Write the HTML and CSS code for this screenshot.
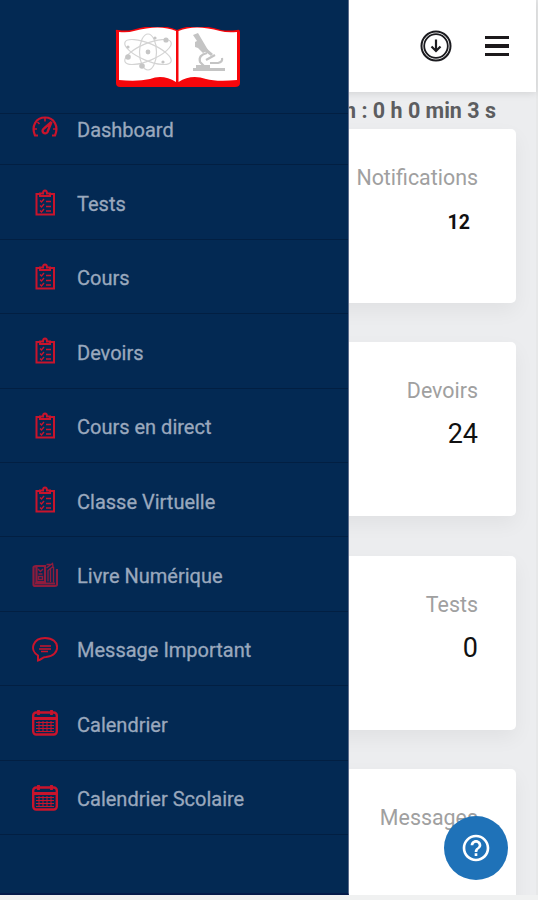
FILE: index.html
```html
<!DOCTYPE html>
<html lang="fr">
<head>
  <meta charset="UTF-8" />
  <meta name="viewport" content="width=device-width, initial-scale=1.0"/>
  <title>Dashboard</title>
  <link rel="stylesheet" href="styles.css">
</head>
<body>

  <!-- shared icons -->
  <svg class="sprite" width="0" height="0">
    <symbol id="clipboard" viewBox="0 0 26 28">
      <path d="M8 5H4.500v20.500h17.500V5h-4M8 7h10V4.500h-3C15 .5 11 .5 11 4.500H8z"/>
      <path d="M8 11.500l1.500 1.500 2.500-3M8 16.500l1.500 1.500 2.500-3M8 21.500l1.500 1.500 2.500-3M14 12.500h5M14 17.500h5M14 22h5" stroke-width="1.400"/>
    </symbol>
    <symbol id="calendar" viewBox="0 0 26 28">
      <rect x="1.200" y="3.500" width="23.600" height="22" rx="3" stroke-width="2.400"/>
      <path d="M1 9.500h24M6.500 1v5M19.500 1v5" stroke-width="2.800"/>
      <path d="M4 13.500h18M4 16.500h18M4 19.500h18M4 22.500h18M7 12v11M11 12v11M15 12v11M19 12v11" stroke-width="1"/>
    </symbol>
  </svg>

  <div class="app">
    <header class="topbar">
      <svg class="download" viewBox="0 0 32 32">
        <circle cx="16" cy="16" r="14.500" stroke-width="2"/>
        <circle cx="16" cy="16" r="11.800" stroke-width="1.800"/>
        <path d="M16 9.500v11M11.500 16.500l4.500 4.500 4.500-4.500" stroke-width="2.200"/>
      </svg>
      <div class="burger"><span></span><span></span><span></span></div>
    </header>

    <main>
      <p class="timer">n : 0 h 0 min 3 s</p>
      <div class="card"><h3>Notifications</h3><p class="count small">12</p></div>
      <div class="card"><h3>Devoirs</h3><p class="count">24</p></div>
      <div class="card"><h3>Tests</h3><p class="count">0</p></div>
      <div class="card"><h3>Messages</h3></div>
    </main>

    <aside class="sidebar">
      <div class="brand">
        <svg class="logo" viewBox="0 0 126 62">
          <path d="M1 5Q0 2 3 3Q10 4 17 3Q44-5 62 3Q80-5 106 3Q114 4 122 3Q125 2 125 5V56Q125 60 120 60H5Q1 60 1 56z" fill="#f6060b"/>
          <path d="M4 5Q13 6 19 4Q45-3 61 4V55Q48 47 35 52Q22 55 4 53zM63.500 4Q80-3 105 4Q112 6 122 5V53Q102 55 91 52Q76 47 63.500 55z" fill="#fff"/>
          <g fill="none" stroke="#d4d4d4" stroke-width="1.200">
            <ellipse cx="33" cy="25" rx="8.500" ry="18"/>
            <ellipse cx="33" cy="25" rx="8.500" ry="25" transform="rotate(67 33 25)"/>
            <ellipse cx="33" cy="25" rx="8.500" ry="25" transform="rotate(-67 33 25)"/>
          </g>
          <g fill="#c6c6c6">
            <circle cx="33" cy="25" r="2.400"/><circle cx="51" cy="13" r="2.600"/><circle cx="13" cy="30" r="2.800"/>
            <circle cx="27" cy="39" r="2.800"/><circle cx="40" cy="11" r="1.600"/><circle cx="13" cy="20" r="1.600"/><circle cx="48" cy="35" r="1.600"/>
          </g>
          <g fill="#c4c4c4">
            <path d="M78 8l5-2 10 17-5 3-5-5-3-1v-5l2-1zM78 41h32v3H78zM81 38h14v4H81z"/>
            <path d="M92 26q-9 2-7 9l5 5M91 33l9-5M95 36h8q5-1 4-5" fill="none" stroke="#c4c4c4" stroke-width="2.200"/>
            <path d="M90 20l8 7-2 2-8-6z"/>
          </g>
        </svg>
      </div>
      <nav class="menu">
        <a class="item">
          <svg class="icon" viewBox="0 0 26 28">
            <path d="M6 21.500H3C-1 12 4 3.500 13 3.500S27 12 23 21.500H20" stroke-width="2.200"/>
            <path d="M13 4v3.500M5.500 8l2 2M2 15h3M21 15h3" stroke-width="1.600"/>
            <path d="M19.500 8l-7.500 6.500a2.600 2.600 0 1 0 3.500 3.500z" stroke-width="2.400"/>
          </svg>
          <span>Dashboard</span>
        </a>
        <a class="item"><svg class="icon"><use href="#clipboard"/></svg><span>Tests</span></a>
        <a class="item"><svg class="icon"><use href="#clipboard"/></svg><span>Cours</span></a>
        <a class="item"><svg class="icon"><use href="#clipboard"/></svg><span>Devoirs</span></a>
        <a class="item"><svg class="icon"><use href="#clipboard"/></svg><span>Cours en direct</span></a>
        <a class="item"><svg class="icon"><use href="#clipboard"/></svg><span>Classe Virtuelle</span></a>
        <a class="item">
          <svg class="icon book" viewBox="0 0 26 28">
            <path d="M4.500 5h8.500v16H4.500zM1.500 6.500q0-1.500 3-1.500M1.500 6v17.500q0 1.500 2 1.500h19.500q2 0 2-1.500V8M3 22.500h20" stroke-width="2.200"/>
            <path d="M6 8l2.500 2.500L11 8M6.500 13h4M6.500 15.500h4v3h-4zM14.500 7l6-4.500.5 3-5 4v11M18.500 8v13M21.500 6v15.500M14.500 3.500h4" stroke-width="1.400"/>
          </svg>
          <span>Livre Numérique</span>
        </a>
        <a class="item">
          <svg class="icon" viewBox="0 0 26 28">
            <path d="M6 25.500v-5C-3 15 1 3 13 3c16 0 16 18 1 19-4 0-4 2.500-8 3.500z"/>
            <path d="M8 11h11M7 14h12M9 16.500h7" stroke-width="1.500"/>
          </svg>
          <span>Message Important</span>
        </a>
        <a class="item"><svg class="icon"><use href="#calendar"/></svg><span>Calendrier</span></a>
        <a class="item"><svg class="icon"><use href="#calendar"/></svg><span>Calendrier Scolaire</span></a>
      </nav>
    </aside>

    <div class="help">
      <svg viewBox="0 0 24 24"><path d="M11 18h2v-2h-2v2zm1-16C6.480 2 2 6.480 2 12s4.480 10 10 10 10-4.480 10-10S17.520 2 12 2zm0 18c-4.410 0-8-3.590-8-8s3.590-8 8-8 8 3.590 8 8-3.590 8-8 8zm0-14c-2.210 0-4 1.790-4 4h2c0-1.100.9-2 2-2s2 .9 2 2c0 2-3 1.750-3 5h2c0-2.250 3-2.500 3-5 0-2.210-1.790-4-4-4z"/></svg>
    </div>
  </div>

</body>
</html>
```
FILE: styles.css
```css
* {
  margin: 0;
  padding: 0;
  box-sizing: border-box;
}

body {
  font-family: Roboto, sans-serif;
  background: #f0f1f1;
  overflow: hidden;
}

.sprite {
  position: absolute;
}

.app {
  position: relative;
  height: 895px;
  background: #ecedef;
  border-right: 2px solid #e7e8e9;
}

.topbar {
  position: relative;
  height: 92px;
  background: #fff;
  box-shadow: 0 1px 8px rgba(0,0,0,0.12);
  display: flex;
  justify-content: flex-end;
  align-items: center;
  gap: 33px;
  padding-right: 27px;
}

.download {
  width: 32px;
  height: 32px;
  fill: none;
  stroke: #1b1b1f;
}

.burger {
  width: 24px;
  display: flex;
  flex-direction: column;
  gap: 5px;
}

.burger span {
  height: 3.500px;
  background: #1c191b;
}

main {
  height: 803px;
  padding-right: 20px;
  overflow: hidden;
}

.timer {
  height: 37px;
  padding-right: 20px;
  line-height: 37px;
  font-size: 21.500px;
  font-weight: 700;
  text-align: right;
  color: #5c5d60;
}

.card {
  height: 174px;
  margin-bottom: 39.300px;
  padding: 34px 38px 0 0;
  background: #fff;
  border-radius: 5px;
  box-shadow: 0 8px 20px rgba(0,0,0,0.05);
  text-align: right;
}

.card h3 {
  font-size: 21.400px;
  font-weight: 400;
  line-height: 30px;
  color: #a0a0a0;
}

.count {
  margin-top: 10px;
  font-size: 27px;
  line-height: 36px;
  color: #111;
}

.count.small {
  margin-top: 12px;
  padding-right: 8px;
  font-size: 19.500px;
  font-weight: 700;
}

/* Drawer over the page */
.sidebar {
  position: absolute;
  top: 0;
  left: 0;
  width: 349px;
  height: 895px;
  background: #032953;
  border-right: 1px solid #5b6b8b;
  border-bottom: 2px solid #041a49;
}

.brand {
  height: 114px;
  padding: 27px 0 0 115px;
  border-bottom: 1px solid #021f42;
}

.logo {
  display: block;
  width: 126px;
  height: 62px;
}

.menu {
  height: 779px;
  overflow: hidden;
}

.item {
  display: flex;
  align-items: center;
  gap: 19px;
  height: 74.400px;
  padding: 4px 0 0 32px;
  border-bottom: 1.500px solid #021f42;
  font-size: 20px;
  color: #9aa8bd;
}

.item:first-child {
  margin-top: -23px;
}

.item span {
  -webkit-text-stroke: 0.300px #9aa8bd;
}

.icon {
  width: 26px;
  height: 28px;
  margin-top: -3px;
  fill: none;
  stroke: #c9142c;
  stroke-width: 2;
}

.icon.book {
  stroke: #8d1c3d;
}

.help {
  position: absolute;
  left: 444px;
  top: 816px;
  width: 64px;
  height: 64px;
  border-radius: 50%;
  background: #1f72b8;
  display: flex;
  justify-content: center;
  align-items: center;
}

.help svg {
  width: 32px;
  height: 32px;
  fill: #fff;
}
```
